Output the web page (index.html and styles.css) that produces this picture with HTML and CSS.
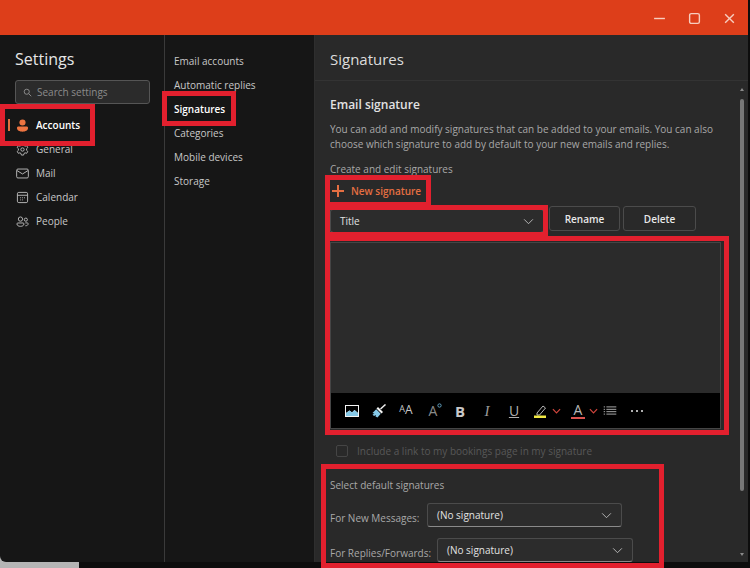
FILE: index.html
```html
<!DOCTYPE html>
<html lang="en">
<head>
    <meta charset="UTF-8">
    <meta name="viewport" content="width=device-width, initial-scale=1.0">
    <title>Settings - Signatures</title>
    <link rel="stylesheet" href="styles.css">
</head>
<body>
    <div class="window">
        <header class="titlebar">
            <svg class="win-btn" viewBox="0 0 12 12"><path d="M1 6h10" /></svg>
            <svg class="win-btn" viewBox="0 0 12 12"><rect x="1.5" y="1.5" width="9" height="9" rx="1.5" /></svg>
            <svg class="win-btn" viewBox="0 0 12 12"><path d="M2 2l8 8M10 2l-8 8" /></svg>
        </header>

        <div class="columns">
            <nav class="nav-main">
                <h1>Settings</h1>
                <div class="search">
                    <svg class="search-icon" viewBox="0 0 12 12"><circle cx="5" cy="5" r="3.4" /><path d="M7.5 7.5L11 11" /></svg>
                    <span>Search settings</span>
                </div>
                <ul class="nav-list">
                    <li class="nav-item active">
                        <span class="active-bar"></span>
                        <svg class="nav-icon" viewBox="0 0 14 14"><circle class="fill-orange" cx="7" cy="3.8" r="3.3" /><path class="fill-orange" d="M1 9.8c0-1 .8-1.6 1.600-1.600h8.800c.8 0 1.600.6 1.600 1.600 0 2.600-2.800 3.900-6 3.900s-6-1.300-6-3.900z" /></svg>
                        Accounts
                    </li>
                    <li class="nav-item">
                        <svg class="nav-icon" viewBox="0 0 14 14"><path d="M5.8 1h2.400l.4 1.700 1.200.7 1.700-.5 1.200 2-1.300 1.200v1.800l1.300 1.200-1.200 2-1.700-.5-1.200.7-.4 1.700H5.800l-.4-1.700-1.200-.7-1.700.5-1.200-2 1.300-1.200V6.100L1.300 4.900l1.200-2 1.700.5 1.200-.7z" /><circle cx="7" cy="7" r="1.8" /></svg>
                        General
                    </li>
                    <li class="nav-item">
                        <svg class="nav-icon" viewBox="0 0 14 14"><rect x=".7" y="2.2" width="12.6" height="9.6" rx="1.4" /><path d="M1 3.8l6 3.7 6-3.7" /></svg>
                        Mail
                    </li>
                    <li class="nav-item">
                        <svg class="nav-icon" viewBox="0 0 14 14"><rect x="1.5" y="1.5" width="11" height="11" rx="1.5" /><path d="M1.5 4.600h11M4.500 7.300h1M6.600 7.300h1M8.700 7.300h1M4.500 9.600h1M6.600 9.600h1" /></svg>
                        Calendar
                    </li>
                    <li class="nav-item">
                        <svg class="nav-icon" viewBox="0 0 14 14"><circle cx="4.800" cy="4.400" r="2.300" /><circle cx="10.600" cy="5" r="1.700" /><path d="M1 9.600c0-.6.4-1 1-1h5.600c.6 0 1 .4 1 1 0 1.800-1.800 2.600-3.800 2.600S1 11.400 1 9.600zM10 8.500h2.200c.5 0 .9.400.9.900 0 1.400-1.200 2.200-3 2.200" /></svg>
                        People
                    </li>
                </ul>
            </nav>

            <nav class="nav-sub">
                <a>Email accounts</a>
                <a>Automatic replies</a>
                <a class="current">Signatures</a>
                <a>Categories</a>
                <a>Mobile devices</a>
                <a>Storage</a>
            </nav>

            <main class="pane">
                <h2 class="pane-title">Signatures</h2>
                <div class="pane-body">
                    <div class="content">
                        <h3>Email signature</h3>
                        <p class="intro">You can add and modify signatures that can be added to your emails. You can also choose which signature to add by default to your new emails and replies.</p>
                        <p class="label">Create and edit signatures</p>
                        <div class="new-signature">
                            <svg viewBox="0 0 12 12"><path d="M6 0v12M0 6h12" /></svg>
                            New signature
                        </div>
                        <div class="title-row">
                            <div class="select select-title">Title<svg class="chevron" viewBox="0 0 12 8"><path d="M1 1.500l5 5 5-5" /></svg></div>
                            <button class="btn btn-rename">Rename</button>
                            <button class="btn btn-delete">Delete</button>
                        </div>
                        <div class="editor">
                            <div class="editor-text"></div>
                            <div class="toolbar">
                                <svg class="tool" viewBox="0 0 14 12"><rect class="fill-white" width="14" height="12" /><path class="fill-black" d="M1 1h12v7L9.500 5 7 7.500 4.500 5.500 1 8z" /><path class="fill-blue" d="M1 8l3.500-2.500L7 7.500 9.500 5 13 8v3H1z" /></svg>
                                <svg class="tool" viewBox="0 0 14 14"><path class="line-white" d="M13.500 .5L8.500 5" /><path class="fill-white" d="M6 3l5 5-1.500 1.500-5-5z" /><path class="fill-blue" d="M4.200 5.300l4.500 4.500L5.500 13.500 3.500 12.500 4 11 2 12 .5 10.500 2.500 9.800 .5 9z" /></svg>
                                <span class="tool-text font-size"><small>A</small>A</span>
                                <span class="tool-text font-grow">A<svg viewBox="0 0 6 6"><circle cx="3" cy="3" r="2" /></svg></span>
                                <span class="tool-text bold">B</span>
                                <span class="tool-text italic">I</span>
                                <span class="tool-text under">U</span>
                                <svg class="tool tool-pen" viewBox="0 0 14 14"><path class="line-grey" d="M3 9l6-7 2.500 2-6 7H3z" /><rect class="fill-yellow" y="11.500" width="12" height="2.500" /></svg>
                                <svg class="red-caret" viewBox="0 0 10 6"><path d="M1 1l4 4 4-4" /></svg>
                                <span class="tool-text text-color">A</span>
                                <svg class="red-caret" viewBox="0 0 10 6"><path d="M1 1l4 4 4-4" /></svg>
                                <svg class="tool tool-list" viewBox="0 0 14 10"><path class="line-grey" d="M0 1h1.500M3 1h11M0 3.700h1.500M3 3.700h11M0 6.300h1.500M3 6.300h11M0 9h1.500M3 9h11" /></svg>
                                <span class="dots"><i></i><i></i><i></i></span>
                            </div>
                        </div>
                        <label class="bookings"><span class="checkbox"></span>Include a link to my bookings page in my signature</label>
                        <p class="label defaults">Select default signatures</p>
                        <div class="default-row row-new">
                            <span>For New Messages:</span>
                            <div class="select">(No signature)<svg class="chevron" viewBox="0 0 12 8"><path d="M1 1.500l5 5 5-5" /></svg></div>
                        </div>
                        <div class="default-row row-reply">
                            <span>For Replies/Forwards:</span>
                            <div class="select">(No signature)<svg class="chevron" viewBox="0 0 12 8"><path d="M1 1.500l5 5 5-5" /></svg></div>
                        </div>
                    </div>
                    <div class="scrollbar">
                        <span class="arrow up"></span>
                        <span class="thumb"></span>
                        <span class="arrow down"></span>
                    </div>
                </div>
            </main>
        </div>
    </div>

    <!-- red annotation boxes drawn over the screenshot -->
    <div class="mark mark-accounts"></div>
    <div class="mark mark-signatures"></div>
    <div class="mark mark-new"></div>
    <div class="mark mark-title"></div>
    <div class="mark mark-editor"></div>
    <div class="mark mark-defaults"></div>
</body>
</html>
```

FILE: styles.css
```css
body {
    margin: 0;
    height: 568px;
    overflow: hidden;
    position: relative;
    font-family: "Open Sans", "Noto Sans", sans-serif;
    font-size: 10px;
    color: #c8c8c8;
    background: linear-gradient(to right, #b5b5b5 79px, #0d0d0d 79px);
}
h1, h2, h3, p, ul {
    margin: 0;
    padding: 0;
    font-weight: normal;
}
svg {
    fill: none;
    stroke: currentColor;
    flex: none;
}
.window {
    width: 748px;
    height: 562px;
    display: flex;
    flex-direction: column;
    overflow: hidden;
    border-bottom-left-radius: 6px;
    background: #161616;
}
.titlebar {
    height: 35px;
    flex: none;
    display: flex;
    align-items: center;
    justify-content: flex-end;
    gap: 22px;
    padding-right: 12px;
    background: #dd3e1a;
    color: #f7cdbf;
}
.win-btn {
    width: 13px;
    height: 13px;
    margin-top: 2px;
    stroke-width: 1.3;
}
.columns {
    flex: 1;
    display: flex;
    min-height: 0;
}

/* first column */
.nav-main {
    width: 149px;
    flex: none;
    border-right: 1px solid #3a3a3a;
    padding: 13px 0 0 15px;
}
.nav-main h1 {
    font-size: 16px;
    line-height: 22px;
    color: #e6e6e6;
}
.search {
    width: 126px;
    height: 22px;
    margin-top: 10px;
    display: flex;
    align-items: center;
    gap: 5px;
    padding-left: 7px;
    border: 1px solid #555;
    border-radius: 3px;
    background: #2b2b2b;
    color: #8b8b8b;
}
.search-icon {
    width: 9px;
    height: 9px;
    stroke-width: 1.3;
}
.nav-list {
    list-style: none;
    margin: 9px 0 0 -15px;
}
.nav-item {
    height: 24px;
    display: flex;
    align-items: center;
    gap: 7px;
    padding-left: 16px;
    position: relative;
}
.nav-item.active {
    color: #fff;
    font-weight: 600;
}
.active-bar {
    position: absolute;
    left: 8px;
    top: 6px;
    width: 2px;
    height: 12px;
    background: #e0703f;
}
.nav-icon {
    width: 13px;
    height: 13px;
    stroke-width: 1;
    color: #bdbdbd;
}
.fill-orange {
    fill: #ee7441;
    stroke: none;
}

/* second column */
.nav-sub {
    width: 149px;
    flex: none;
    display: flex;
    flex-direction: column;
    padding-top: 14px;
    border-right: 1px solid #2e2e2e;
}
.nav-sub a {
    height: 24px;
    line-height: 24px;
    padding-left: 9px;
}
.nav-sub .current {
    color: #fff;
    font-weight: 600;
}

/* right pane */
.pane {
    flex: 1;
    min-width: 0;
    display: flex;
    flex-direction: column;
    background: #292929;
}
.pane-title {
    height: 46px;
    flex: none;
    box-sizing: border-box;
    padding: 12px 0 0 15px;
    font-size: 15px;
    line-height: 24px;
    color: #dcdcdc;
    border-bottom: 1px solid #333;
}
.pane-body {
    flex: 1;
    display: flex;
    min-height: 0;
}
.content {
    flex: 1;
    padding: 14px 0 0 15px;
    min-width: 0;
}
.content h3 {
    font-size: 12px;
    line-height: 20px;
    font-weight: 600;
    color: #e2e2e2;
}
.intro {
    margin-top: 7px;
    width: 392px;
    line-height: 15px;
    color: #a8a8a8;
}
.label {
    color: #a8a8a8;
    line-height: 14px;
}
.intro + .label {
    margin-top: 10px;
}
.new-signature {
    height: 22px;
    margin-top: 4px;
    display: flex;
    align-items: center;
    gap: 7px;
    padding-left: 2px;
    color: #e56f42;
    font-weight: 600;
}
.new-signature svg {
    width: 12px;
    height: 12px;
    stroke-width: 2;
}
.title-row {
    margin-top: 7px;
    display: flex;
    align-items: flex-start;
}
.select {
    height: 24px;
    box-sizing: border-box;
    display: flex;
    align-items: center;
    justify-content: space-between;
    padding: 0 9px;
    border: 1px solid #4b4b4b;
    border-bottom-color: #8a8a8a;
    border-radius: 3px;
    background: #2c2c2c;
    color: #e2e2e2;
}
.select-title {
    width: 214px;
}
.chevron {
    width: 11px;
    height: 7px;
    color: #c4c4c4;
    stroke-width: 1;
}
.btn {
    height: 25px;
    box-sizing: border-box;
    border: 1px solid #4b4b4b;
    border-radius: 3px;
    background: #292929;
    color: #e8e8e8;
    font: 600 10px "Open Sans", sans-serif;
    padding: 0;
}
.btn-rename {
    width: 71px;
    margin: -3px 0 0 5px;
}
.btn-delete {
    width: 73px;
    margin: -3px 0 0 3px;
}
.editor {
    width: 391px;
    height: 187px;
    margin-top: 9px;
    display: flex;
    flex-direction: column;
    box-sizing: border-box;
    border: 1px solid #454545;
    background: #2b2b2b;
}
.editor-text {
    flex: 1;
}
.toolbar {
    height: 35px;
    flex: none;
    display: flex;
    align-items: center;
    gap: 13px;
    padding-left: 14px;
    background: #000;
    color: #c8c8c8;
}
.tool {
    width: 14px;
    height: 14px;
    stroke: none;
}
.fill-white { fill: #f4f4f4; }
.fill-black { fill: #000; }
.fill-blue { fill: #86c9e8; }
.fill-yellow { fill: #f2ea45; }
.line-white { stroke: #eee; stroke-width: 1.5; }
.line-grey { stroke: #b8b8b8; stroke-width: 1; fill: none; }
.tool-text {
    width: 14px;
    text-align: center;
    line-height: 16px;
}
.font-size {
    font-size: 12px;
}
.font-size small {
    font-size: 9px;
    position: relative;
    top: -2px;
}
.font-grow {
    font-size: 14px;
    color: #8a8a8a;
    position: relative;
}
.font-grow svg {
    position: absolute;
    top: 0;
    right: -2px;
    width: 5px;
    height: 5px;
    stroke: #6fb6d8;
}
.bold {
    font-size: 15px;
    font-weight: 700;
}
.italic {
    font-size: 15px;
    font-style: italic;
    font-family: "Liberation Serif", serif;
    color: #9a9a9a;
}
.under {
    font-size: 14px;
    text-decoration: underline;
    color: #b0b0b0;
}
.red-caret {
    width: 9px;
    height: 6px;
    margin-left: -9px;
    color: #d0453c;
    stroke-width: 1.3;
}
.text-color {
    margin-left: -3px;
    font-size: 14px;
    line-height: 14px;
    border-bottom: 2px solid #d9534f;
    color: #b5b5b5;
}
.tool-list {
    margin-left: -8px;
    height: 9px;
}
.dots {
    display: flex;
    gap: 3px;
    margin-left: 1px;
}
.dots i {
    width: 2px;
    height: 2px;
    background: #e8e8e8;
    border-radius: 50%;
}
.bookings {
    margin: 15px 0 0 6px;
    display: flex;
    align-items: center;
    gap: 9px;
    height: 14px;
    color: #585858;
}
.checkbox {
    width: 12px;
    height: 12px;
    border: 1px solid #454545;
    border-radius: 2px;
    box-sizing: border-box;
}
.defaults {
    margin-top: 20px;
}
.default-row {
    display: flex;
    align-items: flex-end;
    color: #a8a8a8;
    margin-top: 11px;
}
.default-row span {
    line-height: 14px;
    position: relative;
    top: -2px;
}
.row-new span {
    width: 97px;
}
.row-new .select {
    width: 195px;
}
.row-reply span {
    width: 107px;
}
.row-reply .select {
    width: 196px;
}
.scrollbar {
    width: 12px;
    flex: none;
    display: flex;
    flex-direction: column;
    align-items: center;
    padding-top: 7px;
}
.thumb {
    width: 4px;
    height: 392px;
    margin-top: 8px;
    background: #787878;
    border-radius: 2px;
}
.arrow {
    width: 0;
    height: 0;
    border-left: 2px solid transparent;
    border-right: 2px solid transparent;
}
.arrow.up {
    border-bottom: 3px solid #8a8a8a;
}
.arrow.down {
    margin-top: 62px;
    border-top: 3px solid #8a8a8a;
}

/* annotations */
.mark {
    position: absolute;
    box-sizing: border-box;
    border: 5px solid #e2202e;
}
.mark-accounts {
    left: 0;
    top: 104px;
    width: 95px;
    height: 42px;
}
.mark-signatures {
    left: 162px;
    top: 91px;
    width: 74px;
    height: 35px;
}
.mark-new {
    left: 325px;
    top: 175px;
    width: 106px;
    height: 32px;
}
.mark-title {
    left: 325px;
    top: 205px;
    width: 223px;
    height: 32px;
}
.mark-editor {
    left: 325px;
    top: 236px;
    width: 404px;
    height: 199px;
}
.mark-defaults {
    left: 321px;
    top: 464px;
    width: 343px;
    height: 104px;
}
```
